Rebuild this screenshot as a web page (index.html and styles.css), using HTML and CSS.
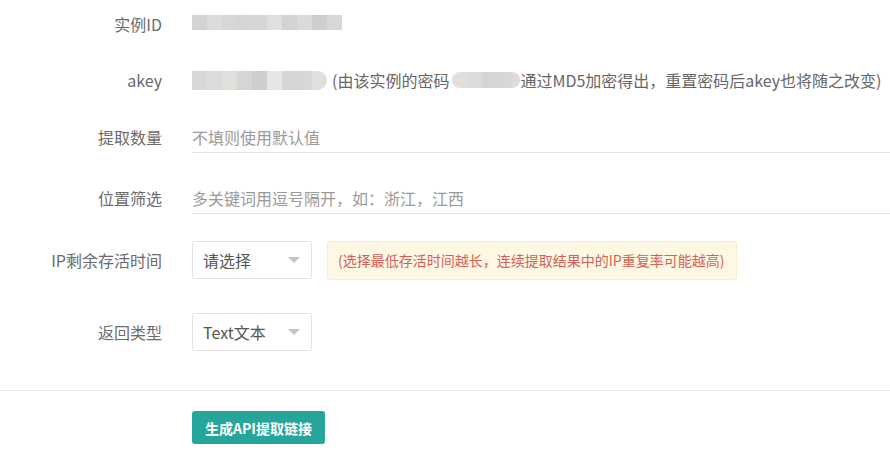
FILE: index.html
```html
<!DOCTYPE html>
<html lang="zh-CN">
<head>
<meta charset="utf-8">
<title>API提取</title>
<link rel="stylesheet" href="styles.css">
</head>
<body>
<div class="form">
  <div class="row r1">
    <div class="label">实例ID</div>
    <div class="content">
      <div class="mosaic m-id">
        <span class="c1"></span><span class="c2"></span><span class="c3"></span><span class="c4"></span><span class="c5"></span><span class="c6"></span><span class="c7"></span><span class="c8"></span><span class="c9"></span><span class="c3"></span>
      </div>
    </div>
  </div>
  <div class="row r2">
    <div class="label">akey</div>
    <div class="content text">
      <div class="mosaic m-key">
        <span class="c3"></span><span class="c2"></span><span class="c6"></span><span class="c4"></span><span class="c9"></span><span class="c10"></span><span class="c5"></span><span class="c3"></span><span class="c6"></span>
      </div>
      <span class="desc">(由该实例的密码</span>
      <div class="mosaic m-pwd">
        <span class="c6"></span><span class="c2"></span><span class="c4"></span><span class="c3"></span><span class="c2"></span>
      </div>
      <span>通过MD5加密得出，重置密码后akey也将随之改变)</span>
    </div>
  </div>
  <div class="row r3">
    <div class="label">提取数量</div>
    <div class="content">
      <input class="line-input" type="text" placeholder="不填则使用默认值">
    </div>
  </div>
  <div class="row r4">
    <div class="label">位置筛选</div>
    <div class="content">
      <input class="line-input" type="text" placeholder="多关键词用逗号隔开，如：浙江，江西">
    </div>
  </div>
  <div class="row r5">
    <div class="label">IP剩余存活时间</div>
    <div class="content">
      <div class="select"><span>请选择</span><i class="arrow"></i></div>
      <div class="hint">(选择最低存活时间越长，连续提取结果中的IP重复率可能越高)</div>
    </div>
  </div>
  <div class="row r6">
    <div class="label">返回类型</div>
    <div class="content">
      <div class="select"><span>Text文本</span><i class="arrow"></i></div>
    </div>
  </div>
</div>
<div class="divider"></div>
<div class="actions">
  <button class="btn" type="button">生成API提取链接</button>
</div>
</body>
</html>
```
FILE: styles.css
```css
* { box-sizing: border-box; }
html, body { margin: 0; padding: 0; background: #fff; }
body {
  font-family: "Noto Sans CJK SC", "Microsoft YaHei", sans-serif;
  font-size: 16px;
  color: #666;
  width: 890px;
  overflow: hidden;
}
.form { padding-top: 5px; }
.row {
  display: flex;
  align-items: center;
  height: 38px;
}
.r2 { margin-top: 18px; }
.r3 { margin-top: 19px; }
.r4 { margin-top: 23px; }
.r5 { margin-top: 24px; }
.r6 { margin-top: 34px; }
.label {
  width: 162px;
  flex: none;
  text-align: right;
  color: #6b6b6b;
  line-height: 20px;
}
.content {
  margin-left: 30px;
  flex: 1;
  display: flex;
  align-items: center;
  line-height: 20px;
  white-space: nowrap;
}
.desc { margin-left: 5px; }
.mosaic {
  display: flex;
  overflow: hidden;
  filter: blur(0.6px);
}
.mosaic span { width: 15px; height: 100%; flex: none; }
.m-id { width: 160px; height: 15px; border-radius: 0 8px 8px 0; margin-top: -3px; }
.m-key { width: 135px; height: 19px; border-radius: 0 10px 10px 0; }
.m-pwd { width: 68px; height: 16px; border-radius: 8px; margin-left: 3px; }
.c1 { background: #d3d3d5; }
.c2 { background: #dddcda; }
.c3 { background: #d7d7d7; }
.c4 { background: #d6d5d3; }
.c5 { background: #d5d6d8; }
.c6 { background: #e0dfdc; }
.c7 { background: #d2d3d5; }
.c8 { background: #d9dadb; }
.c9 { background: #cfcecc; }
.c10 { background: #e4e6e8; }
.line-input {
  flex: 1;
  height: 31px;
  border: none;
  border-bottom: 1px solid #e3e3e3;
  outline: none;
  padding: 0;
  font-family: inherit;
  font-size: 16px;
  color: #555;
  background: transparent;
}
.line-input::placeholder { color: #9a9a9a; }
.select {
  width: 120px;
  height: 38px;
  flex: none;
  border: 1px solid #e2e2e2;
  border-radius: 2px;
  display: flex;
  align-items: center;
  justify-content: space-between;
  padding: 0 11px 0 10px;
  color: #555;
  background: #fff;
}
.arrow {
  width: 0;
  height: 0;
  border-left: 6px solid transparent;
  border-right: 6px solid transparent;
  border-top: 6px solid #c4c4c4;
}
.hint {
  margin-left: 15px;
  height: 39px;
  display: flex;
  align-items: center;
  padding: 0 12px 0 10px;
  background: #fdf8e4;
  border: 1px solid #f9ecc9;
  border-radius: 3px;
  font-size: 14px;
  color: #d65f55;
}
.divider {
  margin-top: 39px;
  height: 1px;
  background: #e6e6e6;
}
.actions { padding: 20px 0 0 192px; }
.btn {
  width: 133px;
  height: 33px;
  border: none;
  border-radius: 3px;
  background: #26a69a;
  color: #fff;
  font-family: inherit;
  font-size: 14px;
  font-weight: bold;
  padding: 0;
  cursor: pointer;
}
```
